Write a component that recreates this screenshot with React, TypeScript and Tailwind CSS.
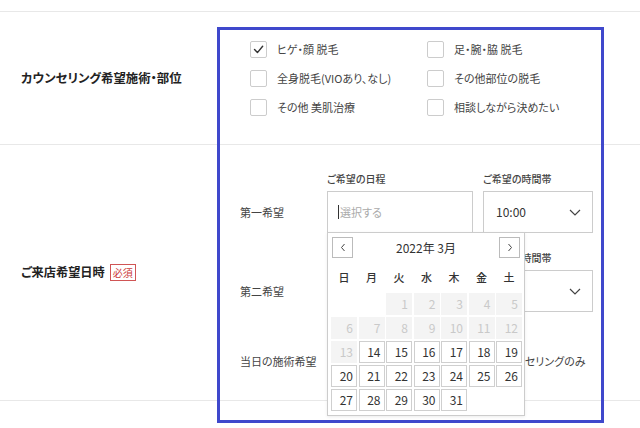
import React from "react";

const Check = () => (
  <svg width="17" height="17" viewBox="0 0 17 17" className="block">
    <path d="M4 8.5 L7.3 12 L13.2 4.8" fill="none" stroke="#333" strokeWidth="1.6" strokeLinecap="round" strokeLinejoin="round" />
  </svg>
);

const Chevron = () => (
  <svg width="12" height="7" viewBox="0 0 12 7" className="block">
    <path d="M1 1 L6 6 L11 1" fill="none" stroke="#444" strokeWidth="1.2" />
  </svg>
);

const Box = ({ checked, label }: { checked?: boolean; label: string }) => (
  <div className="flex items-center h-[29px]">
    <div className="w-[17px] h-[17px] border border-[#ccc] rounded-[2px] bg-white flex items-center justify-center">
      {checked && <Check />}
    </div>
    <span className="ml-[10px] text-[11px] text-[#444] whitespace-nowrap">{label}</span>
  </div>
);

const rows: (number | null)[][] = [
  [null, null, 1, 2, 3, 4, 5],
  [6, 7, 8, 9, 10, 11, 12],
  [13, 14, 15, 16, 17, 18, 19],
  [20, 21, 22, 23, 24, 25, 26],
  [27, 28, 29, 30, 31, null, null],
];

const Calendar = () => (
  <div className="absolute left-0 top-[59px] w-[198px] h-[184px] bg-white border border-[#ccc] shadow-[0_1px_3px_rgba(0,0,0,0.08)] pt-[4px] px-[2px] z-10">
    <div className="flex items-center justify-between h-[21px] px-[2px]">
      <div className="w-[21px] h-[21px] border border-[#bbb] flex items-center justify-center">
        <svg width="6" height="9" viewBox="0 0 6 9"><path d="M4.5 1 L1.5 4.5 L4.5 8" fill="none" stroke="#444" strokeWidth="1" /></svg>
      </div>
      <div className="text-[12px] text-[#333]">2022年 3月</div>
      <div className="w-[21px] h-[21px] border border-[#bbb] flex items-center justify-center">
        <svg width="6" height="9" viewBox="0 0 6 9"><path d="M1.5 1 L4.5 4.5 L1.5 8" fill="none" stroke="#444" strokeWidth="1" /></svg>
      </div>
    </div>
    <div className="grid grid-cols-[repeat(7,26px)] gap-x-[1.5px] mt-[9px] h-[20px] items-center pl-[1px]">
      {["日", "月", "火", "水", "木", "金", "土"].map((d) => (
        <div key={d} className="text-center text-[11px] font-medium text-[#333]">{d}</div>
      ))}
    </div>
    <div className="grid grid-cols-[repeat(7,26px)] auto-rows-[22px] gap-x-[1.5px] gap-y-[2px] mt-[6px] pl-[1px]">
      {rows.flat().map((d, i) =>
        d === null ? (
          <div key={i} />
        ) : d <= 13 ? (
          <div key={i} className="bg-[#f4f4f4] text-[#c9c9c9] text-[12px] leading-[22px] text-right pr-[4px]">{d}</div>
        ) : (
          <div key={i} className="border border-[#cfcfcf] bg-white text-[#333] text-[12px] leading-[20px] text-right pr-[3px]">{d}</div>
        )
      )}
    </div>
  </div>
);

export default function App() {
  return (
    <div className="relative w-[640px] h-[428px] bg-white overflow-hidden font-['Noto_Sans_CJK_JP',sans-serif] text-[#333] [font-feature-settings:'palt']">
      <div className="h-[11px]" />
      <div className="flex h-[134px] border-t border-b border-[#e8e8e8]">
        <div className="w-[240px] pl-[21px] flex items-center">
          <span className="text-[12.4px] font-bold text-[#222] whitespace-nowrap">カウンセリング希望施術・部位</span>
        </div>
        <div className="flex items-center pl-[10px]">
          <div className="grid grid-cols-[177px_auto]">
            <Box checked label="ヒゲ・顔 脱毛" />
            <Box label="足・腕・脇 脱毛" />
            <Box label="全身脱毛(VIOあり、なし)" />
            <Box label="その他部位の脱毛" />
            <Box label="その他 美肌治療" />
            <Box label="相談しながら決めたい" />
          </div>
        </div>
      </div>
      <div className="flex h-[256px] border-b border-[#e8e8e8]">
        <div className="w-[240px] pl-[21px] flex items-center">
          <span className="text-[12.2px] font-bold text-[#222] whitespace-nowrap">ご来店希望日時</span>
          <span className="ml-[5px] h-[17px] px-[2px] border border-[#d05555] text-[#cc3b3b] text-[10px] leading-[15px]">必須</span>
        </div>
        <div className="flex flex-col pt-[28px]">
          <div className="flex">
            <div className="w-[87px] flex items-center self-end h-[42px] text-[11px] text-[#444]">第一希望</div>
            <div className="flex gap-[10px]">
              <div className="relative w-[146px]">
                <div className="h-[12px] text-[10px] leading-[12px] font-medium text-[#444] mb-[6px]">ご希望の日程</div>
                <div className="h-[42px] border border-[#ccc] flex items-center pl-[10px]">
                  <span className="w-px h-[14px] bg-[#333] mr-[1px]" />
                  <span className="text-[11px] text-[#aaa]">選択する</span>
                </div>
                <Calendar />
              </div>
              <div className="w-[110px]">
                <div className="h-[12px] text-[10px] leading-[12px] font-medium text-[#444] mb-[6px]">ご希望の時間帯</div>
                <div className="h-[42px] border border-[#ccc] flex items-center justify-between pl-[12px] pr-[11px]">
                  <span className="text-[12px] text-[#333]">10:00</span>
                  <Chevron />
                </div>
              </div>
            </div>
          </div>
          <div className="flex mt-[19px]">
            <div className="w-[87px] flex items-center self-end h-[42px] text-[11px] text-[#444]">第二希望</div>
            <div className="flex gap-[10px]">
              <div className="w-[146px]">
                <div className="h-[12px] mb-[6px]" />
                <div className="h-[42px] border border-[#ccc]" />
              </div>
              <div className="w-[110px]">
                <div className="h-[12px] text-[10px] leading-[12px] font-medium text-[#444] mb-[6px] whitespace-nowrap">ご希望の時間帯</div>
                <div className="h-[42px] border border-[#ccc] flex items-center justify-end pr-[11px]">
                  <Chevron />
                </div>
              </div>
            </div>
          </div>
          <div className="flex items-center mt-[41px] h-[16px]">
            <div className="w-[87px] text-[11px] text-[#444] whitespace-nowrap">当日の施術希望</div>
            <div className="flex items-center text-[11px] text-[#444] whitespace-nowrap pl-[168px]">
              <span>カウンセリングのみ</span>
            </div>
          </div>
        </div>
      </div>
      <div className="absolute left-[217px] top-[27px] w-[387px] h-[396px] border-[3px] border-[#3f48cc] pointer-events-none z-20" />
    </div>
  );
}
